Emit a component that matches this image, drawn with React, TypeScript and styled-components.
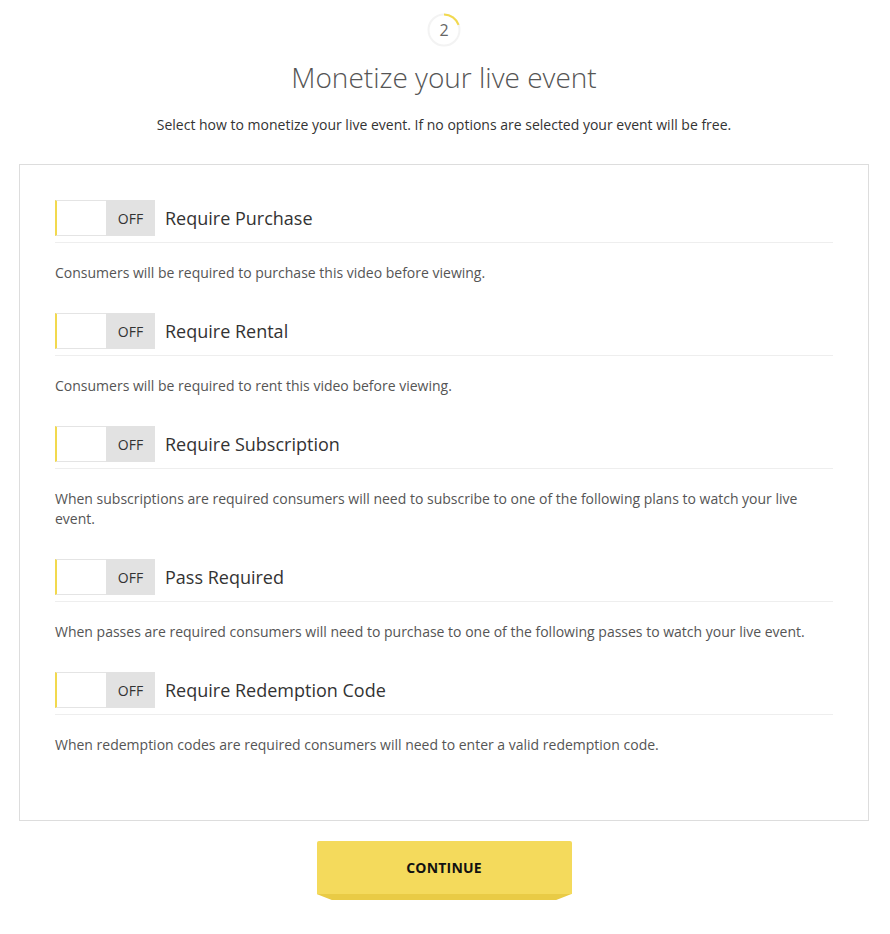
import { createGlobalStyle } from "styled-components";
import styled from "styled-components";

const GlobalStyle = createGlobalStyle`
  body {
    margin: 0;
    background: #fff;
    font-family: "Open Sans", "Liberation Sans", sans-serif;
    color: #333;
  }
`;

const Page = styled.div`
  display: flex;
  flex-direction: column;
  align-items: center;
  padding: 13px 21px 0 19px;
`;

const StepBadge = styled.div`
  position: relative;
  width: 34px;
  height: 34px;
  display: flex;
  align-items: center;
  justify-content: center;
  font-size: 16px;
  color: #666;

  svg {
    position: absolute;
    inset: 0;
  }
`;

const Title = styled.h1`
  margin: 12px 0 0;
  font-size: 28px;
  font-weight: 300;
  color: #555;
  line-height: 36px;
`;

const Subtitle = styled.p`
  margin: 20px 0 0;
  font-size: 14px;
  color: #333;
  line-height: 20px;
`;

const Panel = styled.div`
  align-self: stretch;
  margin-top: 29px;
  border: 1px solid #ddd;
  padding: 35px 35px 65px 35px;
  display: flex;
  flex-direction: column;
  gap: 30px;
`;

const Option = styled.div`
  display: flex;
  flex-direction: column;
`;

const OptionHead = styled.div`
  display: flex;
  align-items: center;
  gap: 10px;
  padding-bottom: 6px;
  border-bottom: 1px solid #eee;
`;

const Toggle = styled.div`
  display: flex;
  width: 100px;
  height: 36px;
  box-sizing: border-box;
`;

const Knob = styled.div`
  width: 51px;
  background: #fff;
  border: 1px solid #e4e4e4;
  border-left: 2px solid #f2d94e;
  border-right: none;
  box-sizing: border-box;
`;

const OffLabel = styled.div`
  flex: 1;
  background: #e2e2e2;
  display: flex;
  align-items: center;
  justify-content: center;
  font-size: 14px;
  color: #333;
`;

const OptionLabel = styled.span`
  font-size: 18px;
  color: #333;
`;

const Description = styled.p`
  margin: 20px 0 0;
  font-size: 14px;
  line-height: 20px;
  color: #555;
`;

const ButtonWrap = styled.div`
  margin-top: 20px;
  display: flex;
  flex-direction: column;
  align-items: center;
  width: 255px;
`;

const ContinueButton = styled.button`
  width: 100%;
  height: 53px;
  border: none;
  border-radius: 2px 2px 0 0;
  background: #f4da5c;
  font-family: inherit;
  font-size: 14px;
  font-weight: 700;
  color: #111;
  letter-spacing: 0.2px;
  cursor: pointer;
`;

const Bevel = styled.div`
  width: 100%;
  height: 6px;
  background: #e9cb45;
  clip-path: polygon(0 0, 100% 0, 94% 100%, 6% 100%);
`;

const options = [
  {
    label: "Require Purchase",
    text: "Consumers will be required to purchase this video before viewing.",
  },
  {
    label: "Require Rental",
    text: "Consumers will be required to rent this video before viewing.",
  },
  {
    label: "Require Subscription",
    text: "When subscriptions are required consumers will need to subscribe to one of the following plans to watch your live event.",
  },
  {
    label: "Pass Required",
    text: "When passes are required consumers will need to purchase to one of the following passes to watch your live event.",
  },
  {
    label: "Require Redemption Code",
    text: "When redemption codes are required consumers will need to enter a valid redemption code.",
  },
];

export default function App() {
  return (
    <>
      <GlobalStyle />
      <Page>
        <StepBadge>
          <svg width="34" height="34" viewBox="0 0 34 34">
            <circle cx="17" cy="17" r="15.5" fill="none" stroke="#f3f3f3" strokeWidth="2" />
            <path
              d="M17 1.5 A15.5 15.5 0 0 1 31.6 11.8"
              fill="none"
              stroke="#f2d94e"
              strokeWidth="2"
            />
          </svg>
          2
        </StepBadge>
        <Title>Monetize your live event</Title>
        <Subtitle>
          Select how to monetize your live event. If no options are selected your event will be free.
        </Subtitle>
        <Panel>
          {options.map((o) => (
            <Option key={o.label}>
              <OptionHead>
                <Toggle>
                  <Knob />
                  <OffLabel>OFF</OffLabel>
                </Toggle>
                <OptionLabel>{o.label}</OptionLabel>
              </OptionHead>
              <Description>{o.text}</Description>
            </Option>
          ))}
        </Panel>
        <ButtonWrap>
          <ContinueButton>CONTINUE</ContinueButton>
          <Bevel />
        </ButtonWrap>
      </Page>
    </>
  );
}
